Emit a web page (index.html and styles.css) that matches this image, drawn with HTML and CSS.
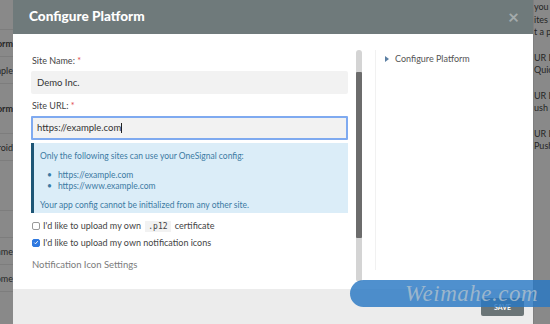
FILE: index.html
```html
<!DOCTYPE html>
<html lang="en">
<head>
    <meta charset="UTF-8">
    <meta name="viewport" content="width=device-width, initial-scale=1.0">
    <title>Configure Platform</title>
    <link rel="stylesheet" href="styles.css">
</head>
<body>

    <!-- Page behind the dialog (only edges show) -->
    <div class="page-edge left-edge">
        <div class="edge-row edge-top"></div>
        <div class="edge-row bold">Platform</div>
        <div class="edge-row">Site URL (example</div>
        <div class="edge-row bold tall">Platform</div>
        <div class="edge-row">Android</div>
        <div class="edge-row tall"></div>
        <div class="edge-row"></div>
        <div class="edge-row">Name</div>
        <div class="edge-row">Chrome (Chrome</div>
    </div>

    <!-- Dialog -->
    <div class="modal">
        <div class="modal-header">
            <span class="modal-title">Configure Platform</span>
            <span class="modal-close">&times;</span>
        </div>

        <div class="modal-body">
            <div class="form-col">
                <label class="field-label">Site Name: <span class="req">*</span></label>
                <div class="text-input">Demo Inc.</div>

                <label class="field-label">Site URL: <span class="req">*</span></label>
                <div class="text-input focused">https://example.com<span class="caret"></span></div>

                <div class="info-box">
                    <p>Only the following sites can use your OneSignal config:</p>
                    <ul>
                        <li>https://example.com</li>
                        <li>https://www.example.com</li>
                    </ul>
                    <p>Your app config cannot be initialized from any other site.</p>
                </div>

                <div class="check-row first-check">
                    <span class="checkbox"></span>
                    <span>I'd like to upload my own <code>.p12</code> certificate</span>
                </div>
                <div class="check-row">
                    <span class="checkbox checked">
                        <svg viewBox="0 0 10 10" width="9" height="9"><path d="M2.2 5.2 L4.2 7.2 L7.9 2.8" fill="none" stroke="#fff" stroke-width="1.6"/></svg>
                    </span>
                    <span>I'd like to upload my own notification icons</span>
                </div>

                <div class="section-title">Notification Icon Settings</div>
            </div>

            <div class="scrollbar"><div class="thumb"></div></div>

            <div class="side-col">
                <div class="side-item"><span class="tri"></span>Configure Platform</div>
            </div>
        </div>

        <div class="modal-footer">
            <button class="save-btn">SAVE</button>
        </div>
    </div>

    <div class="page-edge right-edge">
        <div class="edge-line">you s</div>
        <div class="edge-line">ites f</div>
        <div class="edge-line">t a p</div>
        <div class="edge-gap"></div>
        <div class="edge-line">UR D</div>
        <div class="edge-line">Quick</div>
        <div class="edge-gap"></div>
        <div class="edge-line">UR D</div>
        <div class="edge-line">ush C</div>
        <div class="edge-gap"></div>
        <div class="edge-line">UR D</div>
        <div class="edge-line">Push</div>
    </div>

    <!-- Watermark -->
    <div class="watermark">Weimahe.com</div>

</body>
</html>
```

FILE: styles.css
```css
* {
    margin: 0;
    padding: 0;
    box-sizing: border-box;
}

body {
    width: 550px;
    height: 324px;
    overflow: hidden;
    display: flex;
    font-family: Lato, "Open Sans", sans-serif;
    background: #898989;
}

/* Page edges behind overlay */
.page-edge {
    flex: none;
    overflow: hidden;
    color: #262626;
    font-size: 9px;
    white-space: nowrap;
}

.left-edge {
    width: 13px;
    display: flex;
    flex-direction: column;
    align-items: flex-end;
}

.edge-row {
    height: 27px;
    width: 100%;
    display: flex;
    align-items: center;
    justify-content: flex-end;
    border-bottom: 1px solid #7d7d7d;
}

.edge-row.bold {
    font-weight: bold;
}

.edge-row.tall {
    height: 50px;
}

.edge-top {
    height: 30px;
}

.right-edge {
    width: 17px;
    padding-top: 1px;
    border-left: 1px solid #7f7f7f;
}

.edge-line {
    height: 12.5px;
    line-height: 12.5px;
}

.edge-gap {
    height: 13px;
}

/* Modal */
.modal {
    flex: none;
    width: 520px;
    display: flex;
    flex-direction: column;
    background: #fff;
}

.modal-header {
    height: 34px;
    background: #6f7a7b;
    display: flex;
    align-items: center;
    justify-content: space-between;
    padding: 0 14px 2px 16px;
}

.modal-title {
    color: #fff;
    font-weight: 900;
    font-size: 13.6px;
}

.modal-close {
    color: #a4abac;
    font-size: 19px;
    font-weight: bold;
    line-height: 1;
}

.modal-body {
    height: 255px;
    display: flex;
    padding: 20px 0 0 18px;
}

.form-col {
    width: 317px;
    flex: none;
}

.field-label {
    display: block;
    font-size: 9px;
    color: #444;
    height: 14px;
    line-height: 14px;
    margin: 0 0 3px 1px;
}

.req {
    color: #e0474c;
}

.text-input {
    height: 23px;
    background: #f2f2f2;
    border-radius: 2px;
    font-size: 9.5px;
    color: #333;
    line-height: 23px;
    padding-left: 6px;
    margin-bottom: 5px;
}

.text-input.focused {
    height: 24px;
    line-height: 20px;
    border: 2px solid #7faaf0;
    border-radius: 1px;
    padding-left: 4px;
    margin-bottom: 3px;
}

.caret {
    display: inline-block;
    width: 1px;
    height: 10px;
    background: #222;
    vertical-align: -2px;
}

.info-box {
    background: #dbedf8;
    border-left: 3px solid #1e5676;
    color: #3b7aa3;
    font-size: 8.5px;
    padding: 8px 0 0 6px;
    height: 70px;
}

.info-box ul {
    list-style: none;
    margin: 9px 0 8px 7px;
}

.info-box li {
    line-height: 11px;
}

.info-box li::before {
    content: "\2022";
    margin-right: 6px;
}

.check-row {
    display: flex;
    align-items: center;
    gap: 3px;
    font-size: 9px;
    color: #444;
    height: 17px;
    margin-left: 1px;
}

.first-check {
    margin-top: 4px;
}

.checkbox {
    width: 8px;
    height: 8px;
    border: 1px solid #999;
    border-radius: 2px;
    background: #fff;
    display: flex;
    align-items: center;
    justify-content: center;
}

.checkbox.checked {
    background: #2f79e0;
    border-color: #2f79e0;
}

.checkbox svg {
    width: 7px;
    height: 7px;
}

code {
    font-family: "DejaVu Sans Mono", monospace;
    font-size: 8px;
    background: #f2f2f2;
    padding: 1px 3px;
    margin: 0 2px;
}

.section-title {
    font-size: 9.5px;
    color: #7b7b7b;
    margin: 8px 0 0 1px;
}

/* Scrollbar */
.scrollbar {
    flex: none;
    width: 6px;
    height: 232px;
    margin: -4px 0 0 8px;
    background: #d4d4d4;
    border-radius: 3px;
    padding-top: 22px;
}

.thumb {
    height: 166px;
    background: #6c6c6c;
    border-radius: 1px;
}

/* Side navigation */
.side-col {
    flex: 1;
    margin: -4px 0 0 13px;
    height: 220px;
    border-left: 1px solid #f1f1f1;
    padding: 3px 0 0 9px;
}

.side-item {
    font-size: 9px;
    color: #555;
    display: flex;
    align-items: center;
}

.tri {
    width: 0;
    height: 0;
    border-left: 4px solid #5b7fa3;
    border-top: 3px solid transparent;
    border-bottom: 3px solid transparent;
    margin-right: 6px;
}

/* Footer */
.modal-footer {
    flex: 1;
    background: #ececec;
    display: flex;
    justify-content: flex-end;
    align-items: flex-start;
    padding: 9px 9px 0 0;
}

.save-btn {
    width: 43px;
    height: 18px;
    background: #6b7577;
    color: #fff;
    font-family: Lato, sans-serif;
    font-weight: bold;
    font-size: 7px;
    border: none;
    border-radius: 2px;
}

/* Watermark overlay */
.watermark {
    position: absolute;
    left: 350px;
    top: 280px;
    width: 210px;
    height: 27px;
    border-radius: 14px 0 0 14px;
    background: rgba(40, 120, 195, 0.82);
    color: rgba(170, 190, 205, 0.85);
    font-family: "Liberation Serif", serif;
    font-style: italic;
    font-size: 23px;
    line-height: 27px;
    padding-left: 55px;
    letter-spacing: 0.5px;
}
```
